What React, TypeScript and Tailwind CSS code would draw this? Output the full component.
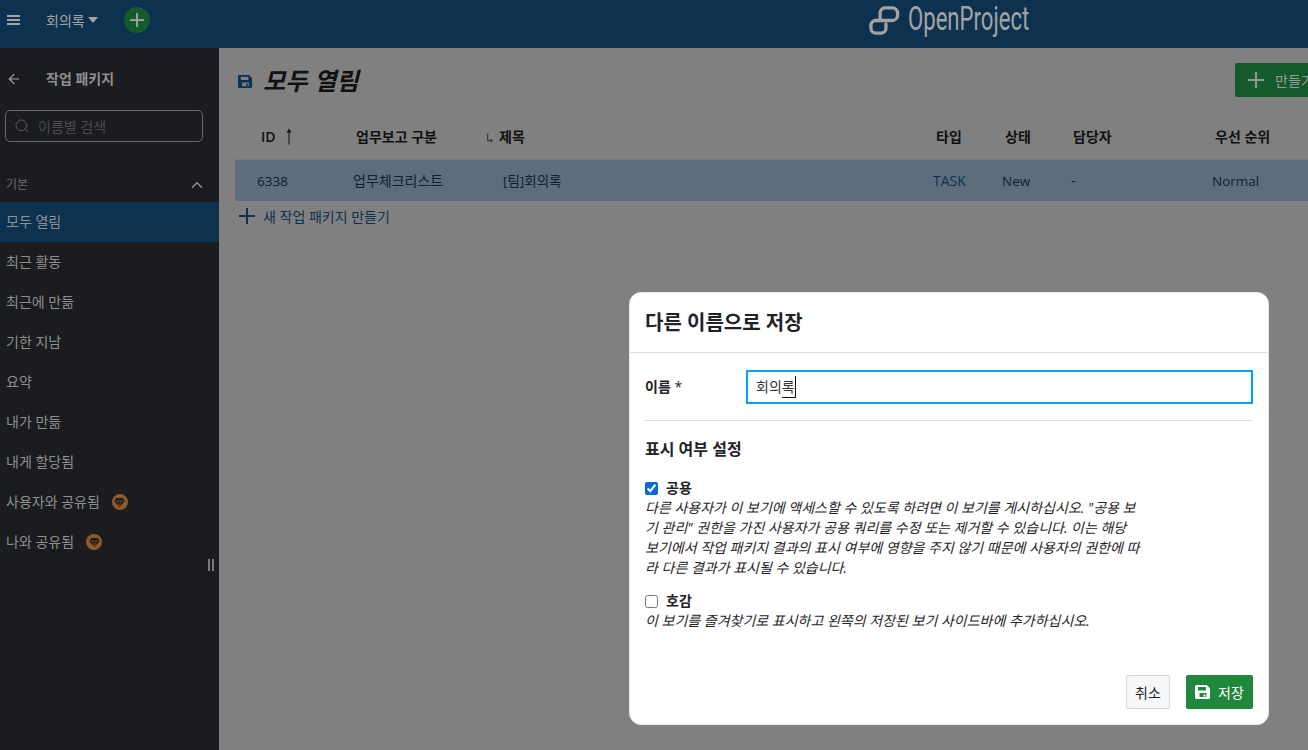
import * as React from "react"
import { ArrowLeft, ChevronUp, Search } from "lucide-react"

const font = { fontFamily: '"Open Sans", "Noto Sans CJK KR", sans-serif' }

const PlusIcon = ({ size, width = 2 }: { size: number; width?: number }) => (
  <svg viewBox="0 0 16 16" width={size} height={size} stroke="currentColor" strokeWidth={width} className="shrink-0">
    <path d="M8 0v16M0 8h16" />
  </svg>
)

const SaveIcon = ({ className }: { className?: string }) => (
  <svg viewBox="0 0 16 16" className={className} fill="currentColor">
    <path
      fillRule="evenodd"
      d="M1.500 1h10.200L15 4.300v9.200a1.500 1.500 0 0 1-1.500 1.500h-12A1.500 1.500 0 0 1 0 13.500v-11A1.500 1.500 0 0 1 1.500 1zM3 3v3.500h8V3zm1.500 6v4h7V9z"
    />
    <rect x="8.500" y="10.500" width="2" height="2" />
  </svg>
)

const Diamond = () => (
  <span className="mt-[2px] flex h-4 w-4 shrink-0 items-center justify-center rounded-full bg-[#8f5a2b]">
    <svg viewBox="0 0 12 10" className="h-[9px] w-[11px]" fill="#1a1c1f">
      <path d="M2.500 0h7L12 3.200 6 10 0 3.200z" />
      <path d="M0.800 3.400h10.400M4 3.400 6 9l2-5.600" stroke="#8f5a2b" strokeWidth="0.700" fill="none" />
    </svg>
  </span>
)

const Logo = () => (
  <svg viewBox="0 0 32 32" className="h-[31px] w-[31px]" fill="none" stroke="#a3a3a3" strokeWidth="3.400" strokeLinecap="round">
    <path d="M11.500 15V8a5 5 0 0 1 5-5h7.500a5.500 5.500 0 0 1 5.500 5.500v2a5.500 5.500 0 0 1-5.500 5.500H7" />
    <path d="M7 16a5 5 0 0 0-5 5v3a5 5 0 0 0 5 5h5.500a5 5 0 0 0 5-5v-4.500" />
  </svg>
)

const items = [
  { label: "모두 열림", active: true },
  { label: "최근 활동" },
  { label: "최근에 만듦" },
  { label: "기한 지남" },
  { label: "요약" },
  { label: "내가 만듦" },
  { label: "내게 할당됨" },
  { label: "사용자와 공유됨", gem: true },
  { label: "나와 공유됨", gem: true },
]

const columns = "grid grid-cols-[96px_150px_430px_69px_68px_142px_100px]"

const App: React.FC = () => {
  return (
    <div className="flex h-[750px] w-[1308px] flex-col overflow-hidden bg-[#808080]" style={font}>
      {/* top bar */}
      <header className="relative flex h-12 shrink-0 items-start bg-[#0d3250]">
        <div className="flex h-10 items-center pl-[7px] text-[#a3a3a3]">
          <div className="flex w-[13px] flex-col gap-[2px]">
            <span className="h-[2px] bg-[#a3a3a3]" />
            <span className="h-[2px] bg-[#a3a3a3]" />
            <span className="h-[2px] bg-[#a3a3a3]" />
          </div>
          <span className="ml-[26px] text-[14px]">회의록</span>
          <span className="ml-[3px] h-0 w-0 border-x-[5px] border-t-[6px] border-x-transparent border-t-[#a3a3a3]" />
          <span className="ml-[26px] flex h-[26px] w-[26px] items-center justify-center rounded-full bg-[#145a2c] text-[#a8a8a8]">
            <PlusIcon size={14} />
          </span>
        </div>
        <div className="absolute left-[869px] top-[3px] flex items-center gap-[8px]">
          <Logo />
          <span
            className="origin-left -translate-y-[1px] scale-x-[0.67] text-[33px] leading-[34px] text-[#a3a3a3]"
            style={{ fontFamily: '"Roboto", sans-serif', fontWeight: 400 }}
          >
            OpenProject
          </span>
        </div>
      </header>

      <div className="flex min-h-0 flex-1">
        {/* sidebar */}
        <aside className="relative w-[219px] shrink-0 bg-[#1a1c1f] text-[#8f8f8f]">
          <div className="flex h-[62px] items-center pb-[1px] pl-[6px]">
            <ArrowLeft size={16} strokeWidth={1.800} className="text-[#a3a3a3]" />
            <span className="ml-[24px] text-[14px] font-bold">작업 패키지</span>
          </div>
          <div className="ml-[5px] flex h-[32px] w-[198px] items-center rounded-[5px] border border-[#6a6a6a] pl-[8px]">
            <Search size={16} strokeWidth={1.500} className="text-[#5d5d5d]" />
            <span className="ml-[8px] text-[14px] text-[#4a4a4a]">이름별 검색</span>
          </div>
          <div className="mt-[29px] flex h-[28px] items-center justify-between pl-[6px] pr-[13px]">
            <span className="text-[12px] text-[#6d6d6d]">기본</span>
            <ChevronUp size={18} strokeWidth={2} />
          </div>
          <nav className="mt-[3px] flex flex-col">
            {items.map((item) => (
              <div
                key={item.label}
                className={`flex h-10 items-center gap-[12px] pb-[2px] pl-[6px] text-[14px] ${item.active ? "bg-[#0d3250]" : ""}`}
              >
                <span>{item.label}</span>
                {item.gem && <Diamond />}
              </div>
            ))}
          </nav>
          <div className="absolute left-[208px] top-[511px] flex gap-[2px]">
            <span className="h-[12px] w-[2px] bg-[#7a7a7a]" />
            <span className="h-[12px] w-[2px] bg-[#7a7a7a]" />
          </div>
        </aside>

        {/* work package table */}
        <main className="min-w-0 flex-1 overflow-hidden pl-4">
          <div className="flex h-[65px] items-center justify-between pt-[2px]">
            <div className="flex items-center gap-[10px] pl-[3px]">
              <SaveIcon className="h-[15px] w-[15px] text-[#0d3250]" />
              <h1 className="text-[24.250px] font-bold italic text-[#111]">모두 열림</h1>
            </div>
            <div className="-mr-[17px] -mt-[3px] flex h-[34px] w-[90px] shrink-0 items-center rounded-[2px] bg-[#145a2c] pl-[13px] text-[#9a9a9a]">
              <PlusIcon size={16} />
              <span className="ml-[11px] text-[14px]">만들기</span>
            </div>
          </div>
          <div className={`${columns} h-[46px] items-center text-[14px] font-bold text-[#111]`}>
            <div className="flex items-center pl-[26px] font-semibold">
              ID
              <svg viewBox="0 0 8 16" className="ml-[9px] h-[17px] w-[8px]" stroke="#111" fill="#111">
                <path d="M4 2v14" strokeWidth="1" />
                <path d="M4 0 6.500 4h-5z" strokeWidth="0" />
              </svg>
            </div>
            <div className="pl-[25px]">업무보고 구분</div>
            <div className="flex items-center pl-[4px]">
              <svg viewBox="0 0 10 12" className="mr-[5px] mt-[3px] h-[12px] w-[9px]" stroke="#222" fill="none">
                <path d="M3 1v8h5M6 7l2 2-2 2" strokeWidth="1" />
              </svg>
              제목
            </div>
            <div className="pl-[25px]">타입</div>
            <div className="pl-[25px]">상태</div>
            <div className="pl-[25px]">담당자</div>
            <div className="pl-[25px]">우선 순위</div>
          </div>
          <div className={`${columns} h-[42px] items-center border-t border-[#707a85] bg-[#5d6d7e] text-[14px] text-[#14202c]`}>
            <div className="pl-[22px] pt-[1px] text-[13.500px]">6338</div>
            <div className="pl-[22px]">업무체크리스트</div>
            <div className="pl-[22px] pt-[1px] text-[13.500px]">[팀]회의록</div>
            <div className="pl-[22px] text-[#0d3250]">TASK</div>
            <div className="pl-[22px] pt-[1px] text-[13.500px]">New</div>
            <div className="pl-[23px]">-</div>
            <div className="pl-[22px] pt-[1px] text-[13.500px]">Normal</div>
          </div>
          <div className="flex h-[30px] items-center pl-[4px] text-[14px] text-[#0d3250]">
            <PlusIcon size={16} />
            <span className="ml-[8px]">새 작업 패키지 만들기</span>
          </div>
        </main>
      </div>

      {/* save as dialog */}
      <div className="absolute left-[629px] top-[292px] flex h-[433px] w-[640px] flex-col rounded-[12px] border border-[#e8e8e8] bg-white text-[#1f2328]">
        <div className="flex h-[60px] shrink-0 items-center border-b border-[#dcdfe3] px-[15px]">
          <h2 className="text-[20px] font-bold">다른 이름으로 저장</h2>
        </div>
        <div className="flex-1 px-[15px]">
          <div className="flex h-[68px] items-center border-b border-[#dcdfe3]">
            <label className="w-[101px] text-[14px] font-bold">
              이름 <span className="font-normal">*</span>
            </label>
            <div className="flex h-[34px] w-[507px] items-center border-2 border-[#00a3ff] pl-[8px] text-[14px] text-[#333]">
              <span>회의</span>
              <span className="border-b border-r border-[#111]">록</span>
            </div>
          </div>
          <h3 className="mt-[16px] text-[16px] font-bold">표시 여부 설정</h3>
          <div className="mt-[17px] flex items-center gap-[8px]">
            <input type="checkbox" defaultChecked className="h-[13px] w-[13px] accent-[#0969da]" />
            <span className="text-[14px] font-bold leading-[20px]">공용</span>
          </div>
          <p className="w-[510px] text-[14px] italic leading-[20px]">
            다른 사용자가 이 보기에 액세스할 수 있도록 하려면 이 보기를 게시하십시오. "공용 보
            <br />
            기 관리" 권한을 가진 사용자가 공용 쿼리를 수정 또는 제거할 수 있습니다. 이는 해당
            <br />
            보기에서 작업 패키지 결과의 표시 여부에 영향을 주지 않기 때문에 사용자의 권한에 따
            <br />
            라 다른 결과가 표시될 수 있습니다.
          </p>
          <div className="mt-[13px] flex items-center gap-[8px]">
            <input type="checkbox" className="h-[13px] w-[13px]" />
            <span className="text-[14px] font-bold leading-[20px]">호감</span>
          </div>
          <p className="text-[14px] italic leading-[20px]">
            이 보기를 즐겨찾기로 표시하고 왼쪽의 저장된 보기 사이드바에 추가하십시오.
          </p>
        </div>
        <div className="flex justify-end gap-4 pb-[15px] pr-[15px]">
          <button className="h-[34px] w-[44px] rounded-[2px] border border-[#d0d7de] bg-[#f6f7f8] text-[14px] text-[#222]">
            취소
          </button>
          <button className="flex h-[34px] w-[67px] items-center justify-center gap-[7px] rounded-[2px] bg-[#1f883d] text-[14px] text-white">
            <SaveIcon className="h-4 w-4" />
            저장
          </button>
        </div>
      </div>
    </div>
  )
}

export default App
